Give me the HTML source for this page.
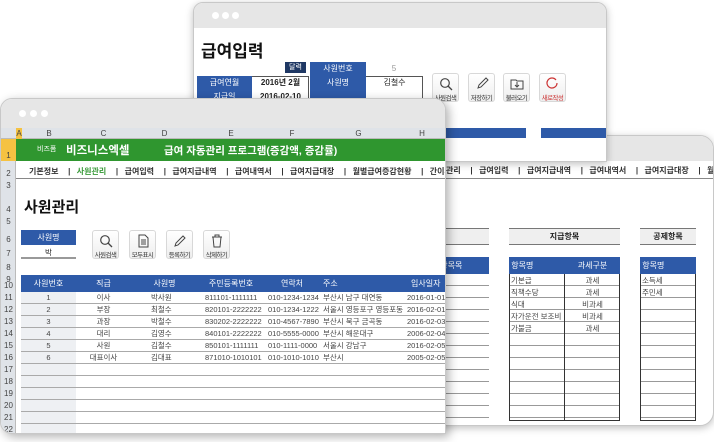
<!DOCTYPE html>
<html><head><meta charset="utf-8"><style>
*{margin:0;padding:0;box-sizing:border-box}
html,body{width:714px;height:442px;overflow:hidden}
body{background:#fff;position:relative;font-family:"Liberation Sans","Noto Sans CJK KR",sans-serif;color:#222}
.a{position:absolute}
.win{position:absolute;background:#fff;border:1px solid #c8c8c8;overflow:hidden;box-shadow:0 2px 8px rgba(0,0,0,.25)}
.bar{position:absolute;left:0;right:0;top:0;background:#e6e6e6}
.dot{position:absolute;width:7px;height:7px;border-radius:50%;background:#fff;top:9px}
.blue{background:#2e5aa8;color:#fff;font-size:8px;text-align:center}
.btn{position:absolute;width:27px;height:29px;border:1px solid #d8d8d8;border-radius:3px;background:linear-gradient(#fff,#eee);font-size:6.5px;letter-spacing:-0.6px;white-space:nowrap;text-align:center;color:#333;overflow:hidden}
.btn svg{display:block;margin:3px auto 1px}
.nav{font-size:8px;font-weight:bold;color:#333;white-space:nowrap;word-spacing:1px}
.rn{position:absolute;left:0;width:15px;text-align:center;font-size:8px;color:#444}
</style></head><body>

<!-- window 3 (right) -->
<div class="win" style="left:437px;top:135px;width:277px;height:291px;border-radius:0 14px 14px 0">
 <div class="bar" style="height:25px"></div>
 <div class="a nav" style="left:8px;top:29px;">관리 &nbsp;&nbsp;| &nbsp;급여입력 &nbsp;&nbsp;| &nbsp;급여지급내역 &nbsp;&nbsp;| &nbsp;급여내역서 &nbsp;&nbsp;| &nbsp;급여지급대장 &nbsp;&nbsp;| &nbsp;월</div>
 <div class="a" style="left:0;right:0;top:42px;height:1px;background:#888"></div>
 <div class="a" style="left:0;top:92px;width:51px;height:17px;background:#efefef;border-top:1px solid #777;border-bottom:1px solid #777"></div>
 <div class="a" style="left:71px;top:92px;width:111px;height:17px;background:#efefef;border-top:1px solid #777;border-bottom:1px solid #777;font-size:8px;font-weight:bold;text-align:center;line-height:16px">지급항목</div>
 <div class="a" style="left:202px;top:92px;width:56px;height:17px;background:#efefef;border-top:1px solid #777;border-bottom:1px solid #777;font-size:8px;font-weight:bold;text-align:center;line-height:16px">공제항목</div>
 <div class="a blue" style="left:0;top:121px;width:51px;height:17px;line-height:17px;text-align:left">&nbsp;항목목</div>
 <div class="a" style="left:2px;top:139px;font-size:7.5px;color:#444">이사</div>
 <div class="a" style="left:71px;top:121px;width:111px;height:164px;border:1px solid #333;border-top:0"></div>
 <div class="a" style="left:126px;top:121px;width:1px;height:164px;background:#333"></div>
 <div class="a blue" style="left:71px;top:121px;width:56px;height:17px;line-height:17px;text-align:left">&nbsp;항목명</div>
 <div class="a blue" style="left:127px;top:121px;width:55px;height:17px;line-height:17px">과세구분</div>
 <div class="a" style="left:202px;top:121px;width:56px;height:164px;border:1px solid #333;border-top:0"></div>
 <div class="a blue" style="left:202px;top:121px;width:56px;height:17px;line-height:17px;text-align:left">&nbsp;항목명</div>
 <div class="a" style="left:0;top:138px;width:51px;height:150px;background:repeating-linear-gradient(#fff 0 11px,#999 11px 12px)"></div>
 <div class="a" style="left:72px;top:138px;width:54px;height:146px;background:repeating-linear-gradient(#fff 0 11px,#999 11px 12px)"></div>
 <div class="a" style="left:127px;top:138px;width:54px;height:146px;background:repeating-linear-gradient(#fff 0 11px,#999 11px 12px)"></div>
 <div class="a" style="left:203px;top:138px;width:54px;height:146px;background:repeating-linear-gradient(#fff 0 11px,#999 11px 12px)"></div>
 <div class="a" style="left:73px;top:139px;font-size:7.5px;line-height:12px;color:#444">기본급<br>직책수당<br>식대<br>자가운전 보조비<br>가불금</div>
 <div class="a" style="left:127px;top:139px;width:55px;text-align:center;font-size:7.5px;line-height:12px;color:#444">과세<br>과세<br>비과세<br>비과세<br>과세</div>
 <div class="a" style="left:204px;top:139px;font-size:7.5px;line-height:12px;color:#444">소득세<br>주민세</div>
</div>

<!-- window 1 (top) -->
<div class="win" style="left:193px;top:2px;width:414px;height:160px;border-radius:10px 10px 0 0">
 <div class="bar" style="height:25px"></div>
 <div class="dot" style="left:18px"></div><div class="dot" style="left:28px"></div><div class="dot" style="left:38px"></div>
 <div class="a" style="left:7px;top:34px;font-size:17px;font-weight:bold;color:#111">급여입력</div>
 <div class="a" style="left:91px;top:59px;width:21px;height:11px;background:#1f3864;color:#fff;font-size:7px;text-align:center;line-height:11px">달력</div>
 <div class="a" style="left:3px;top:73px;width:112px;height:35px;border:1px solid #555"></div>
 <div class="a blue" style="left:3px;top:73px;width:55px;height:14px;line-height:14px">급여연월</div>
 <div class="a" style="left:58px;top:73px;width:57px;height:14px;font-size:8px;text-align:center;line-height:14px;font-weight:bold">2016년 2월</div>
 <div class="a blue" style="left:3px;top:87px;width:55px;height:14px;line-height:14px">지급일</div>
 <div class="a" style="left:58px;top:87px;width:57px;font-size:8px;text-align:center;line-height:14px;font-weight:bold">2016-02-10</div>
 <div class="a blue" style="left:116px;top:59px;width:56px;height:14px;line-height:14px">사원번호</div>
 <div class="a" style="left:172px;top:59px;width:56px;font-size:8px;text-align:center;line-height:14px;color:#999">5</div>
 <div class="a" style="left:116px;top:73px;width:113px;height:35px;border:1px solid #555"></div>
 <div class="a blue" style="left:116px;top:73px;width:56px;height:35px;line-height:14px">사원명</div>
 <div class="a" style="left:172px;top:73px;width:57px;font-size:8px;text-align:center;line-height:14px">김철수</div>
 <div class="btn" style="left:238px;top:70px"><svg width="14" height="14" viewBox="0 0 14 14"><circle cx="6" cy="6" r="4.3" fill="none" stroke="#444" stroke-width="1.2"/><path d="M9 9l4 4" stroke="#444" stroke-width="1.3"/></svg>사원검색</div>
 <div class="btn" style="left:274px;top:70px"><svg width="14" height="14" viewBox="0 0 14 14"><path d="M3 11l1-3 7-7 2 2-7 7z" fill="none" stroke="#444"/></svg>저장하기</div>
 <div class="btn" style="left:309px;top:70px"><svg width="14" height="14" viewBox="0 0 14 14"><path d="M1 3h5l1 1h6v8H1z" fill="none" stroke="#444"/><path d="M7 5v5M5 8l2 2 2-2" stroke="#444" fill="none"/></svg>불러오기</div>
 <div class="btn" style="left:345px;top:70px;color:#c33"><svg width="14" height="14" viewBox="0 0 14 14"><path d="M10 3a5 5 0 1 0 1 3" fill="none" stroke="#c33" stroke-width="1.2"/></svg>새로작성</div>
 <div class="a" style="left:252px;top:125px;width:80px;height:10px;background:#2e5aa8"></div>
 <div class="a" style="left:347px;top:125px;width:67px;height:10px;background:#2e5aa8"></div>
</div>

<!-- front window -->
<div class="win" style="left:0;top:98px;width:446px;height:336px;border-radius:12px 12px 0 12px;box-shadow:3px 3px 10px rgba(0,0,0,.3)">
 <div class="bar" style="height:29px"></div>
 <div class="dot" style="left:18px;top:11px"></div><div class="dot" style="left:29px;top:11px"></div><div class="dot" style="left:40px;top:11px"></div>
 <div class="a" style="left:0;top:29px;width:446px;height:11px;background:#dfe3e8;border-bottom:1px solid #bbb;font-size:8px;color:#444;line-height:11px">
  <span class="a" style="left:15px;width:6px;height:11px;background:#f5c242;text-align:center">A</span>
  <span class="a" style="left:21px;width:54px;text-align:center">B</span>
  <span class="a" style="left:75px;width:55px;text-align:center">C</span>
  <span class="a" style="left:130px;width:67px;text-align:center">D</span>
  <span class="a" style="left:197px;width:66px;text-align:center">E</span>
  <span class="a" style="left:263px;width:56px;text-align:center">F</span>
  <span class="a" style="left:319px;width:77px;text-align:center">G</span>
  <span class="a" style="left:396px;width:50px;text-align:center">H</span>
 </div>
 <div class="a" style="left:0;top:40px;width:15px;height:296px;background:#dfe3e8;border-right:1px solid #bbb"></div>
 <div class="a" style="left:0;top:40px;width:15px;height:22px;background:#f5c242"></div>
 <div class="rn" style="top:52px">1</div><div class="rn" style="top:70px">2</div><div class="rn" style="top:82px">3</div>
 <div class="rn" style="top:106px">4</div><div class="rn" style="top:118px">5</div><div class="rn" style="top:136px">6</div>
 <div class="rn" style="top:150px">7</div><div class="rn" style="top:164px">8</div><div class="rn" style="top:176px">9</div>
 <div class="rn" style="top:182px">10</div><div class="rn" style="top:194px">11</div><div class="rn" style="top:206px">12</div>
 <div class="rn" style="top:218px">13</div><div class="rn" style="top:230px">14</div><div class="rn" style="top:242px">15</div>
 <div class="rn" style="top:254px">16</div><div class="rn" style="top:266px">17</div><div class="rn" style="top:278px">18</div>
 <div class="rn" style="top:290px">19</div><div class="rn" style="top:302px">20</div><div class="rn" style="top:314px">21</div>
 <div class="rn" style="top:326px">22</div>
 <div class="a" style="left:15px;top:40px;width:431px;height:22px;background:#2f962f;color:#fff;white-space:nowrap">
  <span class="a" style="left:21px;top:5px;font-size:7px">비즈폼</span>
  <span class="a" style="left:50px;top:3px;font-size:11.5px;font-weight:bold">비즈니스엑셀</span>
  <span class="a" style="left:148px;top:4px;font-size:10.5px;font-weight:bold">급여 자동관리 프로그램(증감액, 증감률)</span>
 </div>
 <div class="a nav" style="left:28px;top:67px">기본정보 &nbsp;&nbsp;| &nbsp;<span style="color:#3a9a3a">사원관리</span> &nbsp;&nbsp;| &nbsp;급여입력 &nbsp;&nbsp;| &nbsp;급여지급내역 &nbsp;&nbsp;| &nbsp;급여내역서 &nbsp;&nbsp;| &nbsp;급여지급대장 &nbsp;&nbsp;| &nbsp;월별급여증감현황 &nbsp;&nbsp;| &nbsp;간이세액</div>
 <div class="a" style="left:15px;top:79px;width:431px;height:1px;background:#888"></div>
 <div class="a" style="left:23px;top:97px;font-size:15px;font-weight:bold;color:#111">사원관리</div>
 <div class="a blue" style="left:20px;top:131px;width:55px;height:15px;line-height:15px">사원명</div>
 <div class="a" style="left:20px;top:148px;width:55px;font-size:7.5px;text-align:center">박</div>
 <div class="a" style="left:20px;top:158px;width:55px;height:2px;background:#999"></div>
 <div class="btn" style="left:91px;top:131px"><svg width="14" height="14" viewBox="0 0 14 14"><circle cx="6" cy="6" r="4.3" fill="none" stroke="#444" stroke-width="1.2"/><path d="M9 9l4 4" stroke="#444" stroke-width="1.3"/></svg>사원검색</div>
 <div class="btn" style="left:128px;top:131px"><svg width="14" height="14" viewBox="0 0 14 14"><path d="M3 1h6l3 3v9H3z M5 6h5M5 8h5M5 10h5" fill="none" stroke="#444"/></svg>모두표시</div>
 <div class="btn" style="left:165px;top:131px"><svg width="14" height="14" viewBox="0 0 14 14"><path d="M2 12l1-3 7-7 2 2-7 7z" fill="none" stroke="#444"/></svg>등록하기</div>
 <div class="btn" style="left:202px;top:131px"><svg width="14" height="14" viewBox="0 0 14 14"><path d="M2 3h10M5 3V1h4v2M3 3l1 10h6l1-10" fill="none" stroke="#444"/></svg>삭제하기</div>
 <div class="a" style="left:20px;top:176px;width:426px;height:17px;background:#2e5aa8;color:#fff;font-size:8px;white-space:nowrap;line-height:17px">
  <span class="a" style="left:0;width:55px;text-align:center">사원번호</span><span class="a" style="left:55px;width:55px;text-align:center">직급</span><span class="a" style="left:110px;width:67px;text-align:center">사원명</span><span class="a" style="left:177px;width:66px;text-align:center">주민등록번호</span><span class="a" style="left:243px;width:56px;text-align:center">연락처</span><span class="a" style="left:302px">주소</span><span class="a" style="left:390px">입사일자</span>
 </div>
 <div class="a" style="left:20px;top:193px;width:55px;height:143px;background:#eef0f3"></div>
 <div class="a" style="left:20px;top:193px;width:426px;height:143px;background:repeating-linear-gradient(transparent 0 11px,#aaa 11px 12px)"></div>
 <div class="a" style="left:20px;top:193px;font-size:7.5px;line-height:12px;color:#444;white-space:nowrap">
  <div class="a" style="left:0;width:55px;text-align:center">1<br>2<br>3<br>4<br>5<br>6</div>
  <div class="a" style="left:55px;width:55px;text-align:center">이사<br>부장<br>과장<br>대리<br>사원<br>대표이사</div>
  <div class="a" style="left:130px">박사원<br>최철수<br>박철수<br>김영수<br>김철수<br>김대표</div>
  <div class="a" style="left:184px">811101-1111111<br>820101-2222222<br>830202-2222222<br>840101-2222222<br>850101-1111111<br>871010-1010101</div>
  <div class="a" style="left:247px">010-1234-1234<br>010-1234-1222<br>010-4567-7890<br>010-5555-0000<br>010-1111-0000<br>010-1010-1010</div>
  <div class="a" style="left:302px">부산시 남구 대연동<br>서울시 영등포구 영등포동<br>부산시 북구 금곡동<br>부산시 해운대구<br>서울시 강남구<br>부산시</div>
  <div class="a" style="left:386px">2016-01-01<br>2016-02-01<br>2016-02-03<br>2006-02-04<br>2016-02-05<br>2005-02-05</div>
 </div>
</div>
</body></html>
